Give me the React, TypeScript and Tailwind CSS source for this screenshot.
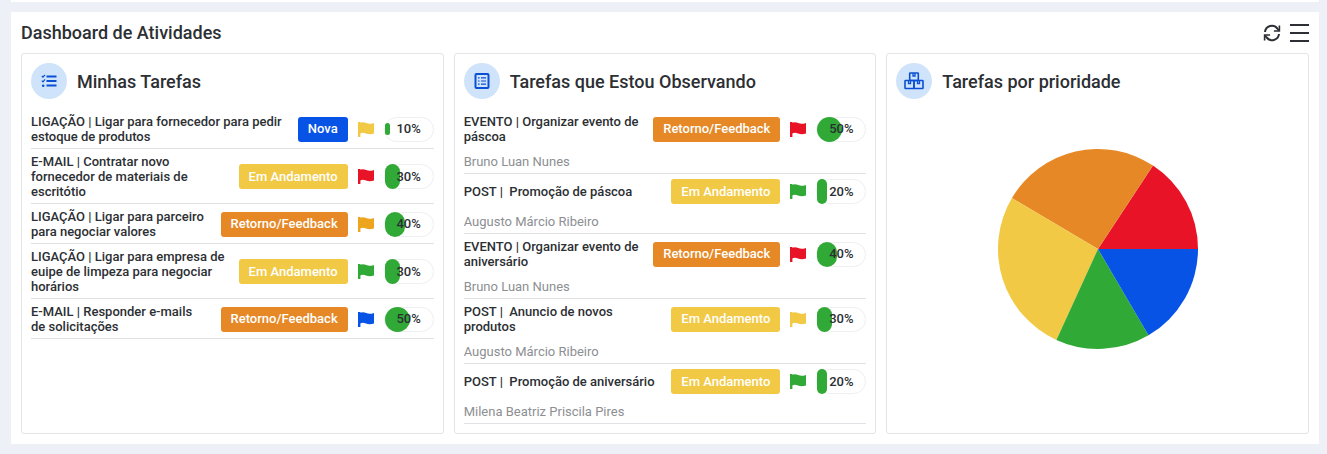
const PRIORITY = {
  red: 'text-[#e91327]',
  yellow: 'text-[#f1c945]',
  orange: 'text-[#eda51f]',
  green: 'text-[#31a936]',
  blue: 'text-[#0653e6]',
};

const STATUS = {
  Nova: 'bg-[#0653e6]',
  'Em Andamento': 'bg-[#f1c945]',
  'Retorno/Feedback': 'bg-[#e68825]',
};

type Task = {
  title: string;
  status: keyof typeof STATUS;
  flag: keyof typeof PRIORITY;
  pct: number;
  owner?: string;
};

const myTasks: Task[] = [
  { title: 'LIGAÇÃO | Ligar para fornecedor para pedir estoque de produtos', status: 'Nova', flag: 'yellow', pct: 10 },
  { title: 'E-MAIL | Contratar novo fornecedor de materiais de escritótio', status: 'Em Andamento', flag: 'red', pct: 30 },
  { title: 'LIGAÇÃO | Ligar para parceiro para negociar valores', status: 'Retorno/Feedback', flag: 'orange', pct: 40 },
  { title: 'LIGAÇÃO | Ligar para empresa de euipe de limpeza para negociar horários', status: 'Em Andamento', flag: 'green', pct: 30 },
  { title: 'E-MAIL | Responder e-mails de solicitações', status: 'Retorno/Feedback', flag: 'blue', pct: 50 },
];

const watched: Task[] = [
  { title: 'EVENTO | Organizar evento de páscoa', status: 'Retorno/Feedback', flag: 'red', pct: 50, owner: 'Bruno Luan Nunes' },
  { title: 'POST |\u00a0 Promoção de páscoa', status: 'Em Andamento', flag: 'green', pct: 20, owner: 'Augusto Márcio Ribeiro' },
  { title: 'EVENTO | Organizar evento de aniversário', status: 'Retorno/Feedback', flag: 'red', pct: 40, owner: 'Bruno Luan Nunes' },
  { title: 'POST |\u00a0 Anuncio de novos produtos', status: 'Em Andamento', flag: 'yellow', pct: 30, owner: 'Augusto Márcio Ribeiro' },
  { title: 'POST |\u00a0 Promoção de aniversário', status: 'Em Andamento', flag: 'green', pct: 20, owner: 'Milena Beatriz Priscila Pires' },
];

function Flag({ color }: { color: string }) {
  return (
    <svg viewBox="0 0 16 15" className={`w-4 h-[15px] shrink-0 ${color}`} fill="currentColor">
      <path d="M0 0h2.4v15H0z" />
      <path d="M2 .8c2.4-1 4.4-.5 6.2.3 2.4 1 4.4 1 7.8-.1v10.6c-3.4 1.1-5.6.9-8 0-2-.9-3.8-1.2-6 0z" />
    </svg>
  );
}

function Progress({ pct }: { pct: number }) {
  return (
    <div className="relative flex h-[25px] w-[50px] shrink-0 items-center justify-center rounded-full border border-[#eeeff1] bg-white text-[13px] font-medium text-[#2c2f33]">
      <div
        className={`absolute left-0 rounded-full bg-[#31a936] ${pct === 10 ? 'h-[12px] rounded-[1px]' : 'h-[25px]'}`}
        style={{ width: pct / 2 }}
      />
      <span className="relative">{pct}%</span>
    </div>
  );
}

function TaskRow({ task }: { task: Task }) {
  return (
    <div className="border-b border-[#dfe1e4] pb-[4px]">
      <div className="flex items-center">
        <div className="min-w-0 flex-1 pr-[11px] text-[13px] font-medium leading-[15px] text-[#2c2f33]">
          {task.title}
        </div>
        <div className={`flex h-[25px] shrink-0 items-center rounded-[3px] px-[10px] text-[13px] font-medium text-white ${STATUS[task.status]}`}>
          {task.status}
        </div>
        <div className="mx-[10px]">
          <Flag color={PRIORITY[task.flag]} />
        </div>
        <Progress pct={task.pct} />
      </div>
      {task.owner && (
        <div className="mt-[10px] text-[13px] leading-[15px] text-[#8d8f93]">{task.owner}</div>
      )}
    </div>
  );
}

function CardHead({ title, children }: { title: string; children: React.ReactNode }) {
  return (
    <div className="flex items-center gap-[10px]">
      <div className="flex h-9 w-9 items-center justify-center rounded-full bg-[#cfe4fb] text-[#0b50d2]">{children}</div>
      <h2 className="text-[18px] font-medium text-[#2c2f33]">{title}</h2>
    </div>
  );
}

function Card({ children }: { children: React.ReactNode }) {
  return (
    <div className="flex-1 rounded-[3px] border border-[#e3e4e7] bg-white px-[9px] pt-[9px]">{children}</div>
  );
}

function TaskList({ tasks }: { tasks: Task[] }) {
  return (
    <div className="mt-[15px] flex flex-col gap-[5px]">
      {tasks.map((t) => (
        <TaskRow key={t.title} task={t} />
      ))}
    </div>
  );
}

function Pie() {
  return (
    <svg viewBox="0 0 200 200" className="mx-auto mt-[50px] h-[200px] w-[200px]">
      <path fill="#e91327" d="M100 100L200 100A100 100 0 0 0 155 16.5Z" />
      <path fill="#e68825" d="M100 100L155 16.5A100 100 0 0 0 13.9 49.1Z" />
      <path fill="#f1c945" d="M100 100L13.9 49.1A100 100 0 0 0 58.4 190.9Z" />
      <path fill="#31a936" d="M100 100L58.4 190.9A100 100 0 0 0 150.5 186.3Z" />
      <path fill="#0653e6" d="M100 100L150.5 186.3A100 100 0 0 0 200 100Z" />
    </svg>
  );
}

export default function App() {
  return (
    <div className="h-[454px] w-[1327px] overflow-hidden bg-[#edf0f6] pl-[11px] pr-[8px] font-['Roboto',sans-serif]">
      <div className="h-[2px] bg-white" />
      <div className="mt-[10px] h-[432px] bg-white px-[10px] pt-[10px]">
        <div className="flex h-[31px] items-start justify-between">
          <h1 className="text-[18px] font-medium leading-[22px] text-[#2c2f33]">Dashboard de Atividades</h1>
          <div className="flex items-center gap-[9px] pt-[2px] text-[#2c2f33]">
            <svg viewBox="0 0 18 18" className="h-[18px] w-[18px]" fill="none" stroke="currentColor" strokeWidth="2">
              <path d="M2 8A6.9 6.9 0 0 1 14.4 4.6L16 6.4" />
              <path d="M16 10A6.9 6.9 0 0 1 3.6 13.4L2 11.6" />
              <path d="M16.4 1.5v5.5h-5.5M1.6 16.5V11h5.5" strokeWidth="1.6" />
            </svg>
            <div className="flex h-[18px] w-[19px] flex-col justify-between">
              <div className="h-[2px] bg-[#2c2f33]" />
              <div className="h-[2px] bg-[#2c2f33]" />
              <div className="h-[2px] bg-[#2c2f33]" />
            </div>
          </div>
        </div>
        <div className="flex h-[381px] gap-[10px]">
          <Card>
            <CardHead title="Minhas Tarefas">
              <svg viewBox="0 0 16 16" className="h-4 w-4" fill="none" stroke="currentColor">
                <path d="M5.5 3.5H15.5M5.5 8H15.5M5.5 12.5H15.5" strokeWidth="2" />
                <path d="M.8 3l1.2 1.2L4 1.8M.8 7.6l1.2 1.2L4 6.4" strokeWidth="1.2" />
                <circle cx="2.2" cy="12.7" r="1.3" fill="currentColor" stroke="none" />
              </svg>
            </CardHead>
            <TaskList tasks={myTasks} />
          </Card>
          <Card>
            <CardHead title="Tarefas que Estou Observando">
              <svg viewBox="0 0 16 16" className="h-4 w-4" fill="none" stroke="currentColor">
                <rect x="1.5" y="1" width="13" height="14" rx="1" strokeWidth="2" />
                <path d="M4 4.8h1.6M7 4.8h5M4 8h1.6M7 8h5M4 11.2h1.6M7 11.2h5" strokeWidth="1.2" />
              </svg>
            </CardHead>
            <TaskList tasks={watched} />
          </Card>
          <Card>
            <CardHead title="Tarefas por prioridade">
              <svg viewBox="0 0 20 18" className="h-[18px] w-5" fill="none" stroke="currentColor" strokeWidth="1.6">
                <rect x="5.7" y="1" width="8.6" height="7.5" rx="0.6" />
                <rect x="1" y="8.5" width="9" height="8" rx="0.6" />
                <rect x="10" y="8.5" width="9" height="8" rx="0.6" />
                <path d="M9 1v3h2V1M4.5 8.5v3h2v-3M13.5 8.5v3h2v-3" strokeWidth="1.3" />
              </svg>
            </CardHead>
            <Pie />
          </Card>
        </div>
      </div>
    </div>
  );
}
